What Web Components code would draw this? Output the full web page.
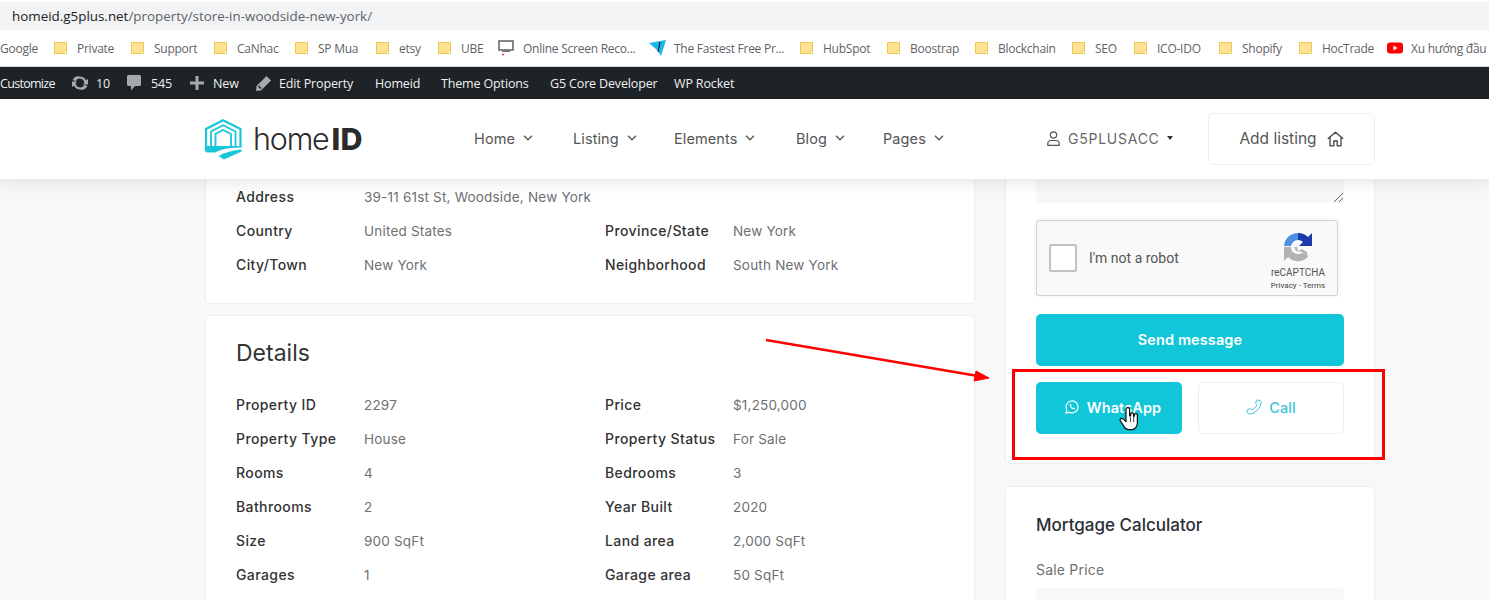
<!DOCTYPE html>
<html lang="en">
<head>
<meta charset="utf-8">
<title>Store in Woodside New York</title>
<style>
html, body { margin: 0; padding: 0; }
body {
    width: 1489px;
    height: 600px;
    overflow: hidden;
    position: relative;
    background: #f8f8f8;
    font-family: "Inter", "Liberation Sans", sans-serif;
}
</style>
</head>
<body>
<browser-address><span>homeid.g5plus.net</span><span slot="path">/property/store-in-woodside-new-york/</span></browser-address>
<bookmark-bar></bookmark-bar>
<wp-admin-bar></wp-admin-bar>
<site-header></site-header>
<page-main>
    <info-card slot="left" class="cut" style="--pad-bottom: 21px">
        <info-row label="Address" value="39-11 61st St, Woodside, New York" wide></info-row>
        <info-row label="Country" value="United States" label2="Province/State" value2="New York"></info-row>
        <info-row label="City/Town" value="New York" label2="Neighborhood" value2="South New York"></info-row>
    </info-card>
    <info-card slot="left" heading="Details">
        <info-row label="Property ID" value="2297" label2="Price" value2="$1,250,000"></info-row>
        <info-row label="Property Type" value="House" label2="Property Status" value2="For Sale"></info-row>
        <info-row label="Rooms" value="4" label2="Bedrooms" value2="3"></info-row>
        <info-row label="Bathrooms" value="2" label2="Year Built" value2="2020"></info-row>
        <info-row label="Size" value="900 SqFt" label2="Land area" value2="2,000 SqFt"></info-row>
        <info-row label="Garages" value="1" label2="Garage area" value2="50 SqFt"></info-row>
    </info-card>
    <contact-card slot="right"></contact-card>
    <mortgage-card slot="right"></mortgage-card>
</page-main>
<screen-annotations></screen-annotations>

<script>
const FOLDER_ICON = `<svg width="13" height="14" viewBox="0 0 13 14"><path d="M.5 1.5h9l3 0v11h-12z" fill="#fde293" stroke="#f0c94b"/><rect x="10" y="10" width="2.5" height="2.5" fill="#fff" stroke="#f0c94b" stroke-width=".8"/></svg>`;
const SCREEN_ICON = `<svg width="17" height="16" viewBox="0 0 17 16"><rect x="1" y="1" width="14" height="9" fill="#fff" stroke="#555" stroke-width="1.4"/><rect x="4" y="10" width="8" height="2" fill="#777"/><circle cx="5" cy="14.5" r="1" fill="#e33"/></svg>`;
const FAST_ICON = `<svg width="17" height="16" viewBox="0 0 17 16"><path d="M0 3 17 0 12 16 8 10z" fill="#18b7e8"/><path d="M11 2 9 12" stroke="#123" stroke-width="1.2"/></svg>`;
const YOUTUBE_ICON = `<svg width="16" height="12" viewBox="0 0 16 12"><rect width="16" height="11" y=".5" rx="3" fill="#f00"/><path d="M6.5 3.5 10.500 6 6.500 8.500z" fill="#fff"/></svg>`;

const BOOKMARKS = [
    { label: "Google", width: 54, noIcon: true },
    { label: "Private", width: 77 },
    { label: "Support", width: 83 },
    { label: "CaNhac", width: 81 },
    { label: "SP Mua", width: 81 },
    { label: "etsy", width: 62 },
    { label: "UBE", width: 60 },
    { label: "Online Screen Reco...", width: 151, icon: SCREEN_ICON, gap: 8 },
    { label: "The Fastest Free Pr...", width: 151, icon: FAST_ICON, gap: 8 },
    { label: "HubSpot", width: 87 },
    { label: "Boostrap", width: 88 },
    { label: "Blockchain", width: 97 },
    { label: "SEO", width: 62 },
    { label: "ICO-IDO", width: 85 },
    { label: "Shopify", width: 80 },
    { label: "HocTrade", width: 88 },
    { label: "Xu hướng đầu", width: 102, icon: YOUTUBE_ICON, gap: 8 }
];

const ADMIN_ITEMS = [
    { text: "Customize", width: 71, tight: true },
    { icon: `<svg width="18" height="16" viewBox="0 0 18 16" fill="#a7aaad"><path d="M9 1.500a6.500 6.500 0 0 1 5.900 3.800L17 4v5.500h-5.400l1.800-1.500A4.700 4.700 0 0 0 4.500 6.200L1.700 5A6.500 6.500 0 0 1 9 1.500z"/><path d="M9 14.500a6.500 6.500 0 0 1-5.900-3.800L1 12V6.500h5.400L4.600 8a4.700 4.700 0 0 0 8.900 1.800l2.800 1.200A6.500 6.500 0 0 1 9 14.500z"/></svg>`, iconGap: 7, text: "10", width: 56 },
    { icon: `<svg width="14" height="16" viewBox="0 0 14 16" fill="#a7aaad"><path d="M1.500 0h11A1.500 1.500 0 0 1 14 1.500v8a1.500 1.500 0 0 1-1.500 1.500H8l-4 4.500V11H1.500A1.500 1.500 0 0 1 0 9.500v-8A1.500 1.500 0 0 1 1.500 0z"/></svg>`, iconGap: 10, text: "545", width: 63 },
    { icon: `<svg width="14" height="14" viewBox="0 0 14 14" fill="#a7aaad"><path d="M5.500 0h3v5.500H14v3H8.500V14h-3V8.500H0v-3h5.500z"/></svg>`, iconGap: 9, text: "New", width: 66 },
    { icon: `<svg width="15" height="15" viewBox="0 0 15 15" fill="#a7aaad"><path d="M10.500 0 15 4.500 5 14.500 0 15l.5-5zM2 10.500l2.500 2.500 1-1L3 9.500z"/></svg>`, iconGap: 8, text: "Edit Property", width: 119 },
    { text: "Homeid", width: 66 },
    { text: "Theme Options", width: 109 },
    { text: "G5 Core Developer", width: 124 },
    { text: "WP Rocket", width: 70 }
];

const NAV_ITEMS = [
    { text: "Home", width: 99 },
    { text: "Listing", width: 101 },
    { text: "Elements", width: 122 },
    { text: "Blog", width: 87 },
    { text: "Pages", width: 70 }
];

const CHEVRON = `<svg width="10" height="6" viewBox="0 0 10 6" fill="none" stroke="#555" stroke-width="1.300"><path d="M1 .8 5 4.800 9 .8"/></svg>`;

class BrowserAddress extends HTMLElement {
    constructor() {
        super();
        this.attachShadow({ mode: "open" });
        this.shadowRoot.innerHTML = `
<style>
:host { display: block; background: #fff; padding-top: 2px; }
.bar {
    height: 28px;
    box-sizing: border-box;
    padding-left: 12px;
    background: #f1f3f4;
    font: 13.4px/28px "Open Sans", sans-serif;
    color: #202124;
    white-space: nowrap;
}
.path { color: #5f6368; }
</style>
<div class="bar"><slot></slot><span class="path"><slot name="path"></slot></span></div>
`;
    }
}

class BookmarkBar extends HTMLElement {
    constructor() {
        super();
        this.attachShadow({ mode: "open" });
        const items = BOOKMARKS.map((item) => `
<div class="item" style="width:${item.width}px">
${item.noIcon ? "" : `<span class="icon" style="margin-right:${item.gap || 10}px">${item.icon || FOLDER_ICON}</span>`}
<span>${item.label}</span>
</div>`).join("");
        this.shadowRoot.innerHTML = `
<style>
:host {
    display: block;
    height: 37px;
    box-sizing: border-box;
    background: #fff;
    border-bottom: 1px solid #d8d9db;
    overflow: hidden;
}
.list { display: flex; height: 36px; }
.item {
    flex: none;
    display: flex;
    align-items: center;
    font: 12px "Open Sans", sans-serif;
    letter-spacing: -.25px;
    color: #5f6368;
    white-space: nowrap;
}
.icon { display: flex; }
</style>
<div class="list">${items}</div>
`;
    }
}

class WpAdminBar extends HTMLElement {
    constructor() {
        super();
        this.attachShadow({ mode: "open" });
        const items = ADMIN_ITEMS.map((item) => `
<div class="item${item.tight ? " tight" : ""}" style="width:${item.width}px">
${item.icon ? `<span class="icon" style="margin-right:${item.iconGap}px">${item.icon}</span>` : ""}
<span>${item.text}</span>
</div>`).join("");
        this.shadowRoot.innerHTML = `
<style>
:host {
    display: block;
    height: 32px;
    background: #1d2327;
    overflow: hidden;
}
.list { display: flex; height: 32px; }
.item {
    flex: none;
    display: flex;
    align-items: center;
    font: 12.500px "Open Sans", sans-serif;
    letter-spacing: -.15px;
    color: #f0f0f1;
    white-space: nowrap;
}
.tight { letter-spacing: -.7px; }
.icon { display: flex; }
</style>
<div class="list">${items}</div>
`;
    }
}

class SiteHeader extends HTMLElement {
    constructor() {
        super();
        this.attachShadow({ mode: "open" });
        const nav = NAV_ITEMS.map((item) => `
<a style="width:${item.width}px">${item.text}<span class="chev">${CHEVRON}</span></a>`).join("");
        this.shadowRoot.innerHTML = `
<style>
:host {
    display: block;
    position: relative;
    z-index: 2;
    height: 80px;
    background: #fff;
    box-shadow: 0 3px 18px rgba(0, 0, 0, .1);
}
.wrap { display: flex; align-items: center; height: 80px; padding-left: 205px; }
.logo { display: flex; align-items: center; width: 269px; flex: none; }
.logo-text {
    margin-left: 11px;
    font: 300 30.500px/40px "Inter", sans-serif;
    letter-spacing: -1.200px;
    color: #2b2b2b;
    white-space: nowrap;
}
.logo-text b { font-weight: 800; letter-spacing: .2px; margin-left: 3px; }
nav { display: flex; flex: none; width: 573px; margin-top: -2px; }
a {
    flex: none;
    display: flex;
    align-items: center;
    font: 14.500px "Inter", sans-serif;
    letter-spacing: .1px;
    color: #555;
    white-space: nowrap;
}
.chev { display: flex; margin-left: 8px; }
.user {
    flex: none;
    width: 161px;
    margin-top: -2px;
    display: flex;
    align-items: center;
    font: 14px "Inter", sans-serif;
    letter-spacing: .75px;
    color: #666;
}
.user svg { margin-right: 8px; }
.caret {
    width: 0;
    height: 0;
    margin-left: 7px;
    border-left: 3.500px solid transparent;
    border-right: 3.500px solid transparent;
    border-top: 4px solid #333;
}
.add {
    flex: none;
    box-sizing: border-box;
    width: 167px;
    height: 52px;
    border: 1px solid #eee;
    border-radius: 5px;
    display: flex;
    align-items: center;
    justify-content: center;
    gap: 10px;
    font: 15.500px "Inter", sans-serif;
    color: #555;
}
.add span { margin-top: -2px; }
</style>
<div class="wrap">
<div class="logo">
<svg width="37" height="41" viewBox="0 0 37 41" fill="none" stroke="#17c6da">
<path d="M1 29V10L18 1.200 35.500 10V28" stroke-width="2.200" stroke-linejoin="round"/>
<path d="M6 28V12.500L18 6.200 30.500 12.500V28" stroke-width="1.800"/>
<path d="M10.500 28V15L18 11 26 15V28" stroke-width="1.800"/>
<path d="M0 27H36.500V28.500C27 28.500 17 29.500 10 33.500L2 33.500Q0 33 0 31Z" fill="#17c6da" stroke="none"/>
<path d="M36.500 30.500V32.500L19 40.500 13.500 37C20 33.500 28 31 36.500 30.500Z" fill="#17c6da" stroke="none"/>
</svg>
<span class="logo-text">home<b>ID</b></span>
</div>
<nav>${nav}</nav>
<div class="user">
<svg width="13" height="15" viewBox="0 0 13 15" fill="none" stroke="#555" stroke-width="1.200"><circle cx="6.500" cy="4" r="3.200"/><path d="M.8 14.300V12.500C.8 10.500 2.500 9.500 4 9.500H9C10.500 9.500 12.200 10.500 12.200 12.500V14.300Z"/></svg>
<span>G5PLUSACC</span><span class="caret"></span>
</div>
<div class="add"><span>Add listing</span>
<svg width="17" height="16" viewBox="0 0 17 16" fill="none" stroke="#444" stroke-width="1.300" stroke-linejoin="round"><path d="M.8 7.800 8.500 1.200 16.200 7.800M3 6.200V14.800H6.800V10H10.200V14.800H14V6.200"/></svg>
</div>
</div>
`;
    }
}

class PageMain extends HTMLElement {
    constructor() {
        super();
        this.attachShadow({ mode: "open" });
        this.shadowRoot.innerHTML = `
<style>
:host {
    display: block;
    height: 421px;
    overflow: hidden;
    background: #f8f8f8;
}
.grid { display: grid; grid-template-columns: 770px 370px; column-gap: 30px; padding-left: 205px; }
.left { display: flex; flex-direction: column; gap: 11px; }
.right { display: flex; flex-direction: column; gap: 22px; }
</style>
<div class="grid">
<div class="left"><slot name="left"></slot></div>
<div class="right"><slot name="right"></slot></div>
</div>
`;
    }
}

class InfoCard extends HTMLElement {
    constructor() {
        super();
        this.attachShadow({ mode: "open" });
    }

    connectedCallback() {
        const heading = this.getAttribute("heading");
        this.shadowRoot.innerHTML = `
<style>
:host {
    display: block;
    box-sizing: border-box;
    background: #fff;
    border: 1px solid #eee;
    border-radius: 5px;
    padding: 20px 30px var(--pad-bottom, 20px);
}
:host(.cut) { border-top: 0; border-radius: 0 0 5px 5px; padding-top: 1px; }
h2 {
    margin: 0 0 18px;
    font: 400 23px/34px "Inter", sans-serif;
    color: #333;
}
</style>
${heading ? `<h2>${heading}</h2>` : ""}
<slot></slot>
`;
    }
}

class InfoRow extends HTMLElement {
    constructor() {
        super();
        this.attachShadow({ mode: "open" });
    }

    connectedCallback() {
        const label2 = this.getAttribute("label2");
        this.shadowRoot.innerHTML = `
<style>
:host {
    display: grid;
    grid-template-columns: 128px 241px 128px 1fr;
    height: 34px;
    align-items: center;
    font: 13.500px "Inter", sans-serif;
    letter-spacing: .2px;
    white-space: nowrap;
}
.k { color: #333; font-weight: 500; font-size: 14px; letter-spacing: .4px; margin-top: -2px; }
.v { color: #6e7073; }
:host([wide]) .v { grid-column: 2 / 5; }
</style>
<span class="k">${this.getAttribute("label")}</span>
<span class="v">${this.getAttribute("value")}</span>
${label2 ? `<span class="k">${label2}</span><span class="v">${this.getAttribute("value2")}</span>` : ""}
`;
    }
}

class RecaptchaBox extends HTMLElement {
    constructor() {
        super();
        this.attachShadow({ mode: "open" });
        this.shadowRoot.innerHTML = `
<style>
:host {
    display: flex;
    align-items: center;
    box-sizing: border-box;
    width: 302px;
    height: 76px;
    padding: 0 11px 0 12px;
    background: #f9f9f9;
    border: 1px solid #d3d3d3;
    border-radius: 3px;
    box-shadow: 0 0 4px rgba(0, 0, 0, .08);
    font-family: "Roboto", sans-serif;
}
.check {
    width: 28px;
    height: 28px;
    box-sizing: border-box;
    background: #fff;
    border: 2px solid #c1c1c1;
    border-radius: 2px;
    flex: none;
}
.text { margin-left: 12px; flex: 1; font-size: 14px; color: #555; }
.brand {
    align-self: flex-start;
    padding-top: 11px;
    display: flex;
    flex-direction: column;
    align-items: center;
    width: 56px;
    color: #555;
}
.name { font-size: 10px; line-height: 12px; margin-top: 5px; }
.terms { font-size: 8px; line-height: 12px; margin-top: 1px; white-space: nowrap; color: #444; }
</style>
<div class="check"></div>
<div class="text">I'm not a robot</div>
<div class="brand">
<svg width="30" height="30" viewBox="0 0 30 30" fill="none">
<path d="M15 1A14 14 0 0 0 1 14L8 14A7 7 0 0 1 15 8Z" fill="#4a90e2"/>
<path d="M15 1A14 14 0 0 1 25 5L29 1V14H16L20 10A7 7 0 0 0 15 8Z" fill="#1c3aa9"/>
<path d="M1 15H8A7 7 0 0 0 20 20L25 25A14 14 0 0 1 5 25L1 29Z" fill="#b2b2b2"/>
<path d="M11 15H14L15 19L19 17L24 20L25 25L20 20L13 19Z" fill="#b2b2b2"/>
</svg>
<div class="name">reCAPTCHA</div>
<div class="terms">Privacy - Terms</div>
</div>
`;
    }
}

class ActionButton extends HTMLElement {
    constructor() {
        super();
        this.attachShadow({ mode: "open" });
        this.shadowRoot.innerHTML = `
<style>
:host {
    display: flex;
    align-items: center;
    justify-content: center;
    gap: 8px;
    box-sizing: border-box;
    height: 52px;
    padding-bottom: 2px;
    border-radius: 5px;
    background: #11c6d8;
    color: #fff;
    font: 600 14.500px "Inter", sans-serif;
    letter-spacing: .1px;
}
:host([outline]) {
    gap: 7px;
    background: #fff;
    color: #3cc4d6;
    border: 1px solid #eee;
    font-weight: 500;
}
::slotted(svg) { display: block; }
</style>
<slot name="icon"></slot><slot></slot>
`;
    }
}

class ContactCard extends HTMLElement {
    constructor() {
        super();
        this.attachShadow({ mode: "open" });
        this.shadowRoot.innerHTML = `
<style>
:host {
    display: block;
    box-sizing: border-box;
    background: #fff;
    border: 1px solid #eee;
    border-top: 0;
    border-radius: 0 0 5px 5px;
    padding: 0 30px 29px;
}
.textarea {
    position: relative;
    height: 24px;
    background: #f8f8f8;
    border-radius: 0 0 5px 5px;
    margin-bottom: 17px;
}
.textarea svg { position: absolute; right: 1px; bottom: 1px; }
.send { margin-top: 18px; }
.whatsapp { padding-left: 8px; }
.pair { display: grid; grid-template-columns: 1fr 1fr; gap: 16px; margin-top: 16px; }
</style>
<div class="textarea">
<svg width="9" height="9" viewBox="0 0 9 9" stroke="#555" stroke-width=".9"><path d="M0 9 9 0M5 9 9 5"/></svg>
</div>
<recaptcha-box></recaptcha-box>
<action-button class="send">Send message</action-button>
<div class="pair">
<action-button class="whatsapp">
<svg slot="icon" width="14" height="14" viewBox="0 0 14 14" fill="none" stroke="#fff" stroke-width="1.200"><path d="M.9 13.100 1.800 9.800A6 6 0 1 1 4.200 12.200Z"/><path d="M4.700 4.200C4.400 6.800 7.200 9.700 9.800 9.300L10.200 8.200 8.700 7.400 8 8C7.200 7.600 6.400 6.800 6 6L6.600 5.300 5.800 3.800Z" fill="#fff" stroke="none"/></svg>
WhatsApp</action-button>
<action-button outline>
<svg slot="icon" width="16" height="16" viewBox="0 0 16 16" fill="none" stroke="#3cc4d6" stroke-width="1"><path d="M11 1 14 1.500C15 1.800 15.200 3 15 4C14.500 9 9.500 14.500 4 15C2.800 15.200 1.500 14.500 1 13V11.500C1 10.800 1.500 10.300 2 10.200L4.500 9.800C5 9.700 5.500 10 6 10.800C8 10 10 8 10.800 6C10 5.500 9.700 5 9.800 4.500L10.200 2C10.300 1.300 10.500 1 11 1Z"/></svg>
Call</action-button>
</div>
`;
    }
}

class MortgageCard extends HTMLElement {
    constructor() {
        super();
        this.attachShadow({ mode: "open" });
        this.shadowRoot.innerHTML = `
<style>
:host {
    display: block;
    box-sizing: border-box;
    background: #fff;
    border: 1px solid #eee;
    border-radius: 5px;
    padding: 26px 30px 20px;
}
h3 { margin: 0 0 21px; font: 500 17px/24px "Inter", sans-serif; color: #2b2f33; }
label { display: block; margin-bottom: 6px; font: 14px/24px "Inter", sans-serif; letter-spacing: .2px; color: #6e7073; }
.input { height: 50px; background: #f8f8f8; border-radius: 5px; }
</style>
<h3>Mortgage Calculator</h3>
<label>Sale Price</label>
<div class="input"></div>
`;
    }
}

// arrow, red frame and hand cursor were drawn over the screenshot, so they sit on a free layer
class ScreenAnnotations extends HTMLElement {
    constructor() {
        super();
        this.attachShadow({ mode: "open" });
        this.shadowRoot.innerHTML = `
<style>
:host { position: absolute; inset: 0; z-index: 5; pointer-events: none; }
svg { display: block; }
</style>
<svg width="1489" height="600" viewBox="0 0 1489 600" fill="none">
<path d="M766 340 978 376" stroke="#f00" stroke-width="2.500"/>
<path d="M989 378 974 381 976 371Z" fill="#f00" stroke="#f00"/>
<rect x="1013.500" y="370.500" width="370" height="88" stroke="#f00" stroke-width="3"/>
<path d="M1126 409.500a1.800 1.800 0 0 1 3.600 0V416l1-.2v-1.500a1.500 1.500 0 0 1 3 0v2l.8-.2v-1a1.500 1.500 0 0 1 3 0v7.500c0 4-2.500 7-5.500 7h-3.500c-2 0-3.200-1-4.400-3l-3.800-6c-.8-1.700 1.400-3 2.700-1.700l3.100 2.700z" fill="#fff" stroke="#111" stroke-width="1.200" stroke-linejoin="round"/>
<path d="M1130.500 417v5M1133.700 417v5" stroke="#111" stroke-width=".8"/>
</svg>
`;
    }
}

customElements.define("browser-address", BrowserAddress);
customElements.define("bookmark-bar", BookmarkBar);
customElements.define("wp-admin-bar", WpAdminBar);
customElements.define("site-header", SiteHeader);
customElements.define("page-main", PageMain);
customElements.define("info-card", InfoCard);
customElements.define("info-row", InfoRow);
customElements.define("recaptcha-box", RecaptchaBox);
customElements.define("action-button", ActionButton);
customElements.define("contact-card", ContactCard);
customElements.define("mortgage-card", MortgageCard);
customElements.define("screen-annotations", ScreenAnnotations);
</script>
</body>
</html>
